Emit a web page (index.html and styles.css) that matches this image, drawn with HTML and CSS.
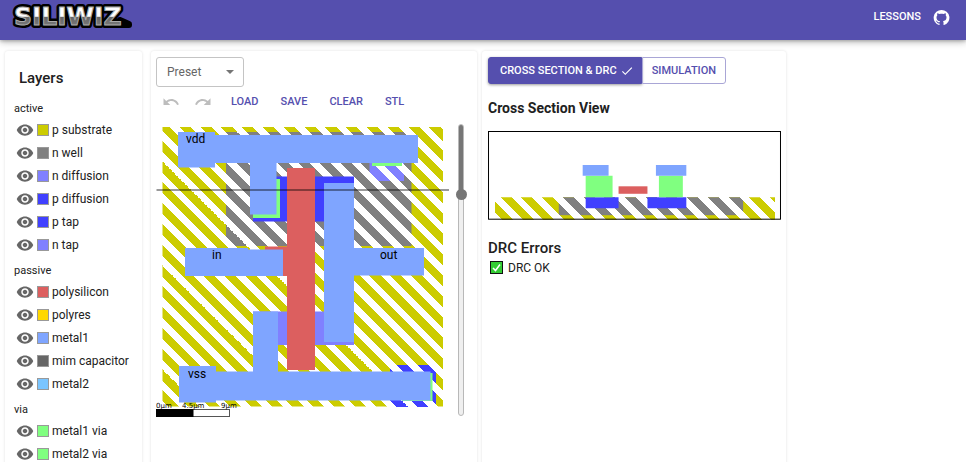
FILE: index.html
```html
<!DOCTYPE html>
<html lang="en">
<head>
<meta charset="utf-8">
<title>SiliWiz</title>
<link rel="stylesheet" href="styles.css">
</head>
<body>
<svg class="defs" aria-hidden="true">
  <defs>
    <symbol id="eye" viewBox="0 0 24 24"><path d="M12 4.500C7 4.500 2.730 7.610 1 12c1.730 4.390 6 7.500 11 7.500s9.270-3.110 11-7.500c-1.730-4.390-6-7.500-11-7.500zM12 17c-2.760 0-5-2.240-5-5s2.240-5 5-5 5 2.240 5 5-2.240 5-5 5zm0-8c-1.660 0-3 1.340-3 3s1.340 3 3 3 3-1.340 3-3-1.340-3-3-3z"/></symbol>
    <linearGradient id="psub" gradientUnits="userSpaceOnUse" x1="0" y1="-1" x2="-10.400" y2="9.400" spreadMethod="repeat">
      <stop offset="0" stop-color="#cccc00"/><stop offset=".53" stop-color="#cccc00"/><stop offset=".53" stop-color="#fff"/><stop offset="1" stop-color="#fff"/>
    </linearGradient>
    <linearGradient id="nwell" href="#psub">
      <stop offset="0" stop-color="#808080"/><stop offset=".53" stop-color="#808080"/><stop offset=".53" stop-color="#fff"/><stop offset="1" stop-color="#fff"/>
    </linearGradient>
    <linearGradient id="ntap" href="#psub">
      <stop offset="0" stop-color="#8080ff"/><stop offset=".53" stop-color="#8080ff"/><stop offset=".53" stop-color="#fff"/><stop offset="1" stop-color="#fff"/>
    </linearGradient>
    <linearGradient id="ptap" href="#psub">
      <stop offset="0" stop-color="#4040ff"/><stop offset=".53" stop-color="#4040ff"/><stop offset=".53" stop-color="#fff"/><stop offset="1" stop-color="#fff"/>
    </linearGradient>
    <linearGradient id="chrome" gradientUnits="userSpaceOnUse" x1="0" y1="7" x2="0" y2="25">
      <stop offset="0" stop-color="#fff"/><stop offset=".52" stop-color="#fff"/><stop offset=".56" stop-color="#666"/><stop offset="1" stop-color="#777"/>
    </linearGradient>
  </defs>
</svg>

<header class="topbar">
  <svg class="logo" viewBox="0 0 126 34" role="img" aria-label="SiliWiz">
    <path d="M112 20l9 4v1h-10z" class="logo-outline"/>
    <text class="logo-outline" x="6" y="25">SILIWIZ</text>
    <text class="logo-face" x="6" y="25">SILIWIZ</text>
  </svg>
  <nav class="topnav">
    <a class="lessons" href="#lessons">LESSONS</a>
    <a class="github" href="#github" aria-label="GitHub"><svg viewBox="0 0 24 24"><path d="M12 1.270a11 11 0 00-3.480 21.460c.55.090.73-.28.73-.55v-1.840c-3.030.64-3.670-1.460-3.670-1.460-.55-1.290-1.280-1.650-1.280-1.650-.92-.65.1-.65.1-.65 1.100 0 1.730 1.100 1.730 1.100.92 1.650 2.570 1.200 3.210.92a2 2 0 01.64-1.470c-2.470-.27-5.040-1.190-5.040-5.500 0-1.100.46-2.100 1.200-2.840a3.760 3.760 0 010-2.930s.91-.28 3.110 1.100c1.800-.49 3.700-.49 5.500 0 2.100-1.380 3.020-1.100 3.020-1.100a3.760 3.760 0 01.1 2.930c.83.740 1.200 1.740 1.200 2.940 0 4.210-2.570 5.130-5.040 5.400.45.370.82.920.82 2.020v3.030c0 .27.1.640.73.550A11 11 0 0012 1.270"/></svg></a>
  </nav>
</header>

<main class="workspace">
  <section class="card layers">
    <h2 class="layers-title">Layers</h2>
    <div class="group">
      <h3>active</h3>
      <ul>
        <li><button aria-label="Toggle p substrate"><svg><use href="#eye"/></svg></button><i class="swatch psub"></i>p substrate</li>
        <li><button aria-label="Toggle n well"><svg><use href="#eye"/></svg></button><i class="swatch nwell"></i>n well</li>
        <li><button aria-label="Toggle n diffusion"><svg><use href="#eye"/></svg></button><i class="swatch ndiff"></i>n diffusion</li>
        <li><button aria-label="Toggle p diffusion"><svg><use href="#eye"/></svg></button><i class="swatch pdiff"></i>p diffusion</li>
        <li><button aria-label="Toggle p tap"><svg><use href="#eye"/></svg></button><i class="swatch pdiff"></i>p tap</li>
        <li><button aria-label="Toggle n tap"><svg><use href="#eye"/></svg></button><i class="swatch ndiff"></i>n tap</li>
      </ul>
    </div>
    <div class="group">
      <h3>passive</h3>
      <ul>
        <li><button aria-label="Toggle polysilicon"><svg><use href="#eye"/></svg></button><i class="swatch poly"></i>polysilicon</li>
        <li><button aria-label="Toggle polyres"><svg><use href="#eye"/></svg></button><i class="swatch polyres"></i>polyres</li>
        <li><button aria-label="Toggle metal1"><svg><use href="#eye"/></svg></button><i class="swatch metal1"></i>metal1</li>
        <li><button aria-label="Toggle mim capacitor"><svg><use href="#eye"/></svg></button><i class="swatch mimcap"></i>mim capacitor</li>
        <li><button aria-label="Toggle metal2"><svg><use href="#eye"/></svg></button><i class="swatch metal2"></i>metal2</li>
      </ul>
    </div>
    <div class="group">
      <h3>via</h3>
      <ul>
        <li><button aria-label="Toggle metal1 via"><svg><use href="#eye"/></svg></button><i class="swatch via"></i>metal1 via</li>
        <li><button aria-label="Toggle metal2 via"><svg><use href="#eye"/></svg></button><i class="swatch via"></i>metal2 via</li>
      </ul>
    </div>
  </section>

  <section class="card editor">
    <div class="preset">
      <select aria-label="Preset"><option>Preset</option></select>
      <svg viewBox="0 0 10 5"><path d="M0 0h10l-5 5z"/></svg>
    </div>
    <div class="toolbar">
      <div class="history">
        <button aria-label="Undo" disabled><svg viewBox="0 0 24 24"><path d="M12.500 8c-2.650 0-5.050.99-6.900 2.600L2 7v9h9l-3.620-3.620c1.390-1.160 3.160-1.880 5.120-1.880 3.540 0 6.550 2.310 7.600 5.500l2.370-.78C21.080 11.030 17.150 8 12.500 8z"/></svg></button>
        <button aria-label="Redo" disabled><svg viewBox="0 0 24 24"><path d="M18.400 10.600C16.550 8.990 14.150 8 11.500 8c-4.650 0-8.580 3.030-9.960 7.220L3.900 16c1.050-3.190 4.050-5.500 7.600-5.500 1.950 0 3.730.72 5.120 1.880L13 16h9V7l-3.600 3.600z"/></svg></button>
      </div>
      <button>LOAD</button>
      <button>SAVE</button>
      <button>CLEAR</button>
      <button>STL</button>
    </div>
    <div class="canvas-row">
      <svg class="layout" viewBox="156 124 293 294">
        <rect x="162.500" y="127" width="280.500" height="279.500" fill="url(#psub)"/>
        <rect x="226" y="132" width="185.500" height="114" fill="url(#nwell)"/>
        <rect x="369.500" y="140" width="34.500" height="41" fill="url(#ntap)"/>
        <rect x="390" y="365" width="46" height="42" fill="url(#ptap)"/>
        <rect class="f-pdiff" x="253" y="176.500" width="101" height="45"/>
        <rect class="f-ndiff" x="253" y="311.500" width="101" height="33.500"/>
        <path class="f-poly" d="M287 168h28v202h-28v-94h-22v-29.500h22z"/>
        <path class="f-via" d="M253 179h27v39h-27zM372 140h30v26h-30zM402 373h30.500v28H402z"/>
        <path class="f-metal" d="M178 132h37v3h203v28H276.500v51.500H250V163h-35v4.500h-37z"/>
        <path class="f-metal" d="M324 183h30v65h70v27.500h-70V342h-30z"/>
        <path class="f-metal" d="M185 248h63v1.500h35V276h-98z"/>
        <path class="f-metal" d="M253 311.500h25v60h152.500v29H216v2h-37v-36.500h37v5.500h37z"/>
        <path class="cut" d="M156.500 190H449"/>
        <g class="pin">
          <text x="186" y="143">vdd</text>
          <text x="212" y="259">in</text>
          <text x="380" y="259">out</text>
          <text x="188" y="378">vss</text>
        </g>
        <rect class="scale" x="156.500" y="409.500" width="73" height="7"/>
        <rect x="156" y="409" width="37.500" height="8"/>
        <g class="scale-text">
          <text x="156" y="408">0µm</text>
          <text x="182" y="408">4.5µm</text>
          <text x="221" y="408">9µm</text>
        </g>
      </svg>
      <input class="cut-slider" type="range" min="0" max="100" value="23" aria-label="Cross section position">
    </div>
  </section>

  <section class="card results">
    <div class="tabs">
      <button class="active">CROSS SECTION &amp; DRC<svg viewBox="0 0 24 24"><path d="M9 16.170 4.830 12l-1.420 1.410L9 19 21 7l-1.410-1.410z"/></svg></button>
      <button>SIMULATION</button>
    </div>
    <h2 class="section-title">Cross Section View</h2>
    <svg class="section-view" viewBox="487 131 294 89">
      <rect x="494" y="197.500" width="281" height="22.500" fill="url(#psub)"/>
      <rect x="558" y="197.500" width="185" height="18" fill="url(#nwell)"/>
      <path class="f-pdiff" d="M585 197.500h33v11h-33zM647 197.500h39v11h-39z"/>
      <path class="f-via" d="M585 176h27v21.500h-27zM658.500 176h24v21.500h-24z"/>
      <path class="f-metal" d="M582 165h26v11h-26zM655.500 165h30.500v11h-30.500z"/>
      <path class="f-poly" d="M618 186.500h29v7.500h-29z"/>
      <rect class="frame" x="487.500" y="131.500" width="293" height="88"/>
    </svg>
    <h2 class="drc-title">DRC Errors</h2>
    <p class="drc"><svg viewBox="0 0 13 13"><rect x=".5" y=".5" width="12" height="12"/><path d="M3 7l2.500 2.500L10 3.500"/></svg>DRC OK</p>
  </section>
</main>
</body>
</html>
```
FILE: styles.css
```css
* { box-sizing: border-box; }
body {
  margin: 0;
  height: 100vh;
  overflow: hidden;
  display: flex;
  flex-direction: column;
  background: #fff;
  color: #212121;
  font: 12px/20px Roboto, sans-serif;
}
h2, h3, p, ul { margin: 0; padding: 0; }
button { border: 0; background: none; padding: 0; font: inherit; }
.defs { position: absolute; width: 0; height: 0; }

.topbar {
  flex: none;
  display: flex;
  align-items: flex-start;
  justify-content: space-between;
  height: 40px;
  padding: 0 16px 0 8px;
  background: #554fae;
  box-shadow: 0 1px 3px rgba(0, 0, 0, .2), 0 2px 7px rgba(0, 0, 0, .28);
}
.logo { width: 126px; height: 34px; }
.logo text { font: bold 25px "DejaVu Sans", sans-serif; }
.logo-outline { fill: #000; stroke: #000; stroke-width: 6; stroke-linejoin: round; }
.logo-face { fill: url(#chrome); stroke: #aaa; stroke-width: 1; }
.topnav { display: flex; align-items: center; gap: 12px; height: 34px; }
.topnav a { color: #fff; text-decoration: none; }
.lessons { font-size: 11px; font-weight: 500; }
.github svg { display: block; width: 17px; height: 17px; fill: #fff; }

.workspace {
  flex: 1;
  display: grid;
  grid-template-columns: 141fr 326fr 304fr 170fr;
  gap: 5px;
  padding: 11px 5px 0;
}
.card {
  min-width: 0;
  border-radius: 3px;
  background: #fff;
  box-shadow: 0 0 3px rgba(0, 0, 0, .12);
}

.layers { margin-right: 4px; padding-left: 9px; }
.layers-title { padding: 17px 0 11px 5px; font-size: 15px; font-weight: 500; line-height: 20px; }
.group { margin-bottom: 5px; }
.group h3 { font-size: 11px; font-weight: 400; line-height: 19px; }
.group ul { list-style: none; }
.group li { display: flex; align-items: center; height: 23px; padding-left: 2px; white-space: nowrap; }
.group button { display: flex; }
.group button svg { width: 18px; height: 18px; fill: #666; }
.swatch { width: 12px; height: 12px; margin: 0 3px 0 3px; border: 1px solid #999; }
.psub { background: #cccc00; }
.nwell { background: #808080; }
.ndiff { background: #8080ff; }
.pdiff { background: #4040ff; }
.poly { background: #dc5f5f; }
.polyres { background: #ffd800; }
.metal1 { background: #7fa5ff; }
.mimcap { background: #666; }
.metal2 { background: #7ac5ff; }
.via { background: #80ff80; }

.editor { padding: 6px 12px 0 5px; }
.preset { position: relative; width: 88px; height: 30px; }
.preset select {
  width: 100%;
  height: 100%;
  padding: 0 10px;
  appearance: none;
  border: 1px solid #c4c4c4;
  border-radius: 3px;
  background: #fff;
  color: #666;
  font: inherit;
}
.preset svg { position: absolute; right: 10px; top: 13px; width: 8px; height: 4px; fill: #757575; }
.toolbar { display: flex; align-items: center; gap: 22px; height: 30px; padding-left: 6px; color: #554fae; font-size: 11px; font-weight: 500; }
.toolbar button { color: inherit; }
.history { display: flex; gap: 14px; margin-right: -3px; }
.history button { display: flex; }
.history svg { width: 18px; height: 18px; fill: #bdbdbd; }
.canvas-row { display: flex; gap: 6px; padding-top: 7px; align-items: flex-start; }
.layout { flex: 1; min-width: 0; display: block; }
.f-pdiff { fill: #4040ff; }
.f-ndiff { fill: #8080ff; }
.f-poly { fill: #dc5f5f; }
.f-via { fill: #80ff80; }
.f-metal { fill: #7fa5ff; }
.cut { stroke: #000; stroke-opacity: .8; }
.pin { font-size: 12px; }
.scale { fill: #fff; stroke: #555; }
.scale-text { font: 7px "DejaVu Sans", sans-serif; }

.cut-slider {
  appearance: none;
  writing-mode: vertical-lr;
  width: 11px;
  height: 292px;
  margin: 0 -1px 0 0;
  background: none;
}
.cut-slider::-webkit-slider-runnable-track {
  width: 6px;
  height: 100%;
  border: 1px solid #b8b8b8;
  border-radius: 3px;
  background: linear-gradient(#767676 23%, #efefef 23%) border-box;
}
.cut-slider::-webkit-slider-thumb {
  appearance: none;
  width: 11px;
  height: 11px;
  margin-left: -3px;
  border-radius: 50%;
  background: #767676;
}

.results { padding: 6px 5px 0 6px; }
.tabs { display: flex; height: 27px; font-size: 11px; font-weight: 500; }
.tabs button { display: flex; align-items: center; padding: 0 9px; border: 1px solid #a9a6d6; border-radius: 0 3px 3px 0; color: #554fae; }
.tabs .active { gap: 3px; padding: 0 7px 0 11px; border-color: #554fae; border-radius: 3px 0 0 3px; background: #554fae; color: #fff; box-shadow: 0 1px 3px rgba(0, 0, 0, .4); }
.tabs svg { width: 14px; height: 14px; fill: #fff; }
.section-title { margin: 14px 0 13px; font-size: 14px; font-weight: 700; line-height: 20px; }
.section-view { display: block; width: 100%; }
.frame { fill: none; stroke: #000; }
.drc-title { margin-top: 18px; font-size: 15px; font-weight: 500; line-height: 20px; }
.drc { display: flex; align-items: center; gap: 5px; padding-left: 2px; }
.drc svg { width: 13px; height: 13px; }
.drc rect { fill: #33cc33; stroke: #111; }
.drc path { fill: none; stroke: #fff; stroke-width: 1.500; }
```
